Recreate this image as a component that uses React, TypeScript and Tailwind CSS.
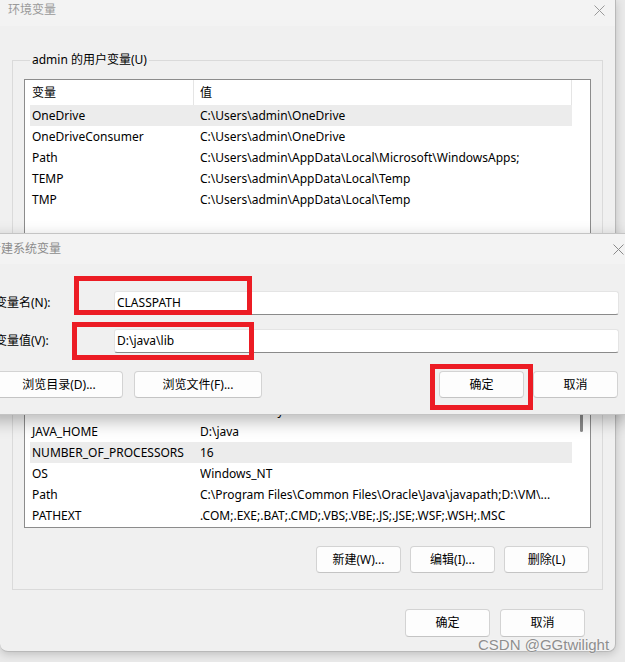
import type { ReactNode } from "react";

const font = { fontFamily: '"Noto Sans", "Noto Sans CJK SC", sans-serif' };

type Row = { name: string; value: string; active?: boolean };

const userRows: Row[] = [
  { name: "OneDrive", value: "C:\\Users\\admin\\OneDrive", active: true },
  { name: "OneDriveConsumer", value: "C:\\Users\\admin\\OneDrive" },
  { name: "Path", value: "C:\\Users\\admin\\AppData\\Local\\Microsoft\\WindowsApps;" },
  { name: "TEMP", value: "C:\\Users\\admin\\AppData\\Local\\Temp" },
  { name: "TMP", value: "C:\\Users\\admin\\AppData\\Local\\Temp" },
];

const systemRows: Row[] = [
  { name: "ComSpec", value: "C:\\Windows\\system32\\cmd.exe" },
  { name: "DriverData", value: "C:\\Windows\\System32\\Drivers\\DriverData" },
  { name: "JAVA_HOME", value: "D:\\java" },
  { name: "NUMBER_OF_PROCESSORS", value: "16", active: true },
  { name: "OS", value: "Windows_NT" },
  { name: "Path", value: "C:\\Program Files\\Common Files\\Oracle\\Java\\javapath;D:\\VM\\..." },
  { name: "PATHEXT", value: ".COM;.EXE;.BAT;.CMD;.VBS;.VBE;.JS;.JSE;.WSF;.WSH;.MSC" },
];

const CloseIcon = ({ color = "#8f8f8f" }: { color?: string }) => (
  <svg width="11" height="11" viewBox="0 0 11 11">
    <path d="M0.5 0.5 L10.5 10.5 M10.5 0.5 L0.5 10.5" stroke={color} strokeWidth="1" fill="none" />
  </svg>
);

const Button = ({ children, className = "" }: { children: ReactNode; className?: string }) => (
  <div
    className={`flex items-center justify-center rounded-[4px] border border-[#d3d3d3] border-b-[#c4c4c4] bg-[#fdfdfd] text-[12px] leading-[16px] text-black ${className}`}
  >
    {children}
  </div>
);

const ListRow = ({ row }: { row: Row }) => (
  <div className={`flex h-[21px] shrink-0 items-center whitespace-nowrap ${row.active ? "bg-[#ececec]" : ""}`}>
    <div className="w-[170px] shrink-0 pl-[2px]">{row.name}</div>
    <div className="min-w-0 flex-1 overflow-hidden">{row.value}</div>
  </div>
);

const ListHeader = () => (
  <div className="flex h-[25px] shrink-0 items-center bg-white">
    <div className="flex h-full w-[164px] items-center border-r border-[#e5e5e5] pl-[2px]">变量</div>
    <div className="flex h-full flex-1 items-center border-r border-[#e5e5e5] pl-[6px]">值</div>
  </div>
);

const Input = ({ value }: { value: string }) => (
  <div className="flex h-[24px] flex-1 items-center rounded-[3px] border border-[#e4e4e4] border-b-[#8a8a8a] bg-white pl-[2px] text-[12px]">
    {value}
  </div>
);

export default function App() {
  return (
    <div className="relative h-[662px] w-[625px] overflow-hidden bg-[#e9e9e9] text-[12px] leading-[16px] text-black" style={font}>
      {/* background window: 环境变量 */}
      <div className="flex h-[652px] w-[616px] flex-col rounded-b-[8px] border-r border-b border-[#b9b9b9] bg-[#f0f0f0] shadow-[0_2px_8px_rgba(0,0,0,0.18)]">
        <div className="flex h-[26px] shrink-0 items-start justify-between bg-[#f3f3f3] pl-[8px] pr-[10px] pt-[2px]">
          <span className="text-[12px] leading-[16px] text-[#9a9a9a]">环境变量</span>
          <span className="pt-[3px]">
            <CloseIcon color="#9a9a9a" />
          </span>
        </div>

        <div className="flex flex-1 flex-col px-[12px]">
          <fieldset className="mt-[26px] min-w-0 border border-[#dadada] px-[11px] pt-[11px] pb-[11px]">
            <legend className="ml-[6px] px-[2px] leading-[16px]">admin 的用户变量(U)</legend>
            <div className="flex h-[166px] flex-col border border-[#8c8c8c] bg-white pl-[5px]">
              <div className="flex min-h-0 flex-1">
                <div className="flex w-[542px] flex-col">
                  <ListHeader />
                  {userRows.map((r) => (
                    <ListRow key={r.name} row={r} />
                  ))}
                </div>
              </div>
            </div>
          </fieldset>

          <fieldset className="mt-[10px] min-w-0 border border-[#dadada] px-[11px] pt-[11px] pb-[16px]">
            <legend className="ml-[6px] px-[2px] leading-[16px]">系统变量(S)</legend>
            <div className="flex h-[234px] border border-[#8c8c8c] bg-white pl-[5px]">
              <div className="flex w-[542px] flex-col">
                <ListHeader />
                <div className="flex min-h-0 flex-1 flex-col justify-end overflow-hidden pb-[1px]">
                  {systemRows.map((r) => (
                    <ListRow key={r.name} row={r} />
                  ))}
                </div>
              </div>
              <div className="flex w-[18px] justify-center pt-[118px]">
                <div className="h-[19px] w-[3px] rounded-full bg-[#8a8a8a]" />
              </div>
            </div>
            <div className="mt-[18px] flex justify-end gap-[9px] pr-[2px]">
              <Button className="h-[27px] w-[85px]">新建(W)...</Button>
              <Button className="h-[27px] w-[85px]">编辑(I)...</Button>
              <Button className="h-[27px] w-[85px]">删除(L)</Button>
            </div>
          </fieldset>

          <div className="mt-[19px] flex justify-end gap-[10px] pr-[18px]">
            <Button className="h-[28px] w-[85px]">确定</Button>
            <Button className="h-[28px] w-[85px]">取消</Button>
          </div>
        </div>
      </div>

      {/* dialog window: 新建系统变量 */}
      <div className="absolute left-[-18px] top-[233px] flex w-[645px] flex-col border border-[#c4c4c4] bg-[#f0f0f0] shadow-[0_6px_16px_rgba(0,0,0,0.28)]">
        <div className="flex h-[30px] items-center justify-between bg-[#f3f3f3] pl-[6px] pr-[2px]">
          <span className="text-[#8c8c8c]">新建系统变量</span>
          <CloseIcon color="#8a8a8a" />
        </div>
        <div className="flex flex-col pl-[12px] pr-[7px] pt-[27px] pb-[16px]">
          <div className="flex items-center">
            <div className="w-[119px] shrink-0">变量名(N):</div>
            <Input value="CLASSPATH" />
          </div>
          <div className="mt-[14px] flex items-center">
            <div className="w-[119px] shrink-0">变量值(V):</div>
            <Input value="D:\java\lib" />
          </div>
          <div className="mt-[18px] flex items-center justify-between">
            <div className="flex gap-[11px]">
              <Button className="h-[27px] w-[128px]">浏览目录(D)...</Button>
              <Button className="h-[27px] w-[128px]">浏览文件(F)...</Button>
            </div>
            <div className="flex gap-[9px] pr-[1px]">
              <Button className="h-[27px] w-[85px]">确定</Button>
              <Button className="h-[27px] w-[85px]">取消</Button>
            </div>
          </div>
        </div>
      </div>

      {/* red annotation boxes */}
      <div className="absolute left-[74px] top-[276px] h-[39px] w-[178px] border-[5px] border-[#ec1c24]" />
      <div className="absolute left-[72px] top-[322px] h-[38px] w-[182px] border-[5px] border-[#ec1c24]" />
      <div className="absolute left-[430px] top-[364px] h-[46px] w-[103px] border-[5px] border-[#ec1c24]" />

      {/* watermark */}
      <div
        className="absolute left-[478px] top-[636px] text-[15px] leading-[18px] text-[#8e8e8e]"
        style={{ fontFamily: '"Liberation Sans", sans-serif', textShadow: "0 0 2px #ffffff" }}
      >
        CSDN @GGtwilight
      </div>
    </div>
  );
}
